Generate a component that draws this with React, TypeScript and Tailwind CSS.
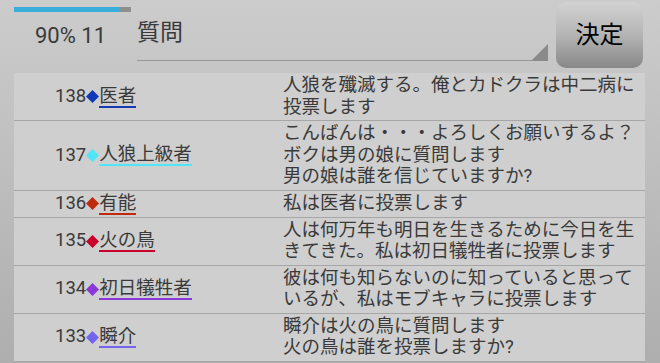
const rows = [
  {
    no: 138,
    name: "医者",
    line: "border-[#1838b0]",
    fill: "#1038b8",
    msg: "人狼を殲滅する。俺とカドクラは中二病に投票します",
  },
  {
    no: 137,
    name: "人狼上級者",
    line: "border-[#4ee6f8]",
    fill: "#4ee6f8",
    msg: "こんばんは・・・よろしくお願いするよ？\nボクは男の娘に質問します\n男の娘は誰を信じていますか?",
  },
  {
    no: 136,
    name: "有能",
    line: "border-[#c02a0c]",
    fill: "#c02a0c",
    msg: "私は医者に投票します",
  },
  {
    no: 135,
    name: "火の鳥",
    line: "border-[#c8022a]",
    fill: "#c8022a",
    msg: "人は何万年も明日を生きるために今日を生きてきた。私は初日犠牲者に投票します",
  },
  {
    no: 134,
    name: "初日犠牲者",
    line: "border-[#8a38d8]",
    fill: "#8a38d8",
    msg: "彼は何も知らないのに知っていると思っているが、私はモブキャラに投票します",
  },
  {
    no: 133,
    name: "瞬介",
    line: "border-[#7464ee]",
    fill: "#7464ee",
    msg: "瞬介は火の鳥に質問します\n火の鳥は誰を投票しますか?",
  },
];

function Diamond({ fill }: { fill: string }) {
  return (
    <svg width="13" height="13" viewBox="0 0 13 13" className="shrink-0">
      <polygon points="6.5,0 13,6.5 6.5,13 0,6.5" fill={fill} />
    </svg>
  );
}

export default function App() {
  return (
    <div className="flex h-[363px] w-[660px] flex-col overflow-hidden bg-gradient-to-b from-[#cccccc] to-[#aeaeae] font-['Roboto','Noto_Sans_CJK_JP',sans-serif] text-[#3a3a3a]">
      {/* header */}
      <div className="flex h-[73px] shrink-0">
        <div className="flex w-[137px] flex-col">
          <div className="ml-[14px] mt-[7px] flex h-[5px] w-[117px] bg-[#8e8e8e]">
            <div className="h-full w-[106px] bg-[#3aaedb]" />
          </div>
          <div className="mt-[11px] pl-[35px] text-[22px] leading-[26px]">90% 11</div>
        </div>
        <div className="relative flex-1">
          <div className="mt-[20px] text-[23px] leading-[26px]">質問</div>
          <div className="absolute bottom-[12px] left-0 right-0 h-px bg-[#979797]" />
          <svg width="17" height="17" viewBox="0 0 17 17" className="absolute bottom-[12px] right-0">
            <polygon points="17,0 17,17 0,17" fill="#8a8a8a" />
          </svg>
        </div>
        <button
          type="button"
          className="ml-[8px] mr-[17px] mt-[2px] flex h-[66px] w-[87px] items-center justify-center rounded-[10px] bg-gradient-to-b from-[#d2d2d2] via-[#b4b4b4] to-[#888888] text-[24px] text-black"
        >
          決定
        </button>
      </div>

      {/* list */}
      <div className="ml-[14px] w-[631px] bg-[#cfcfcf]">
        {rows.map((r) => (
          <div key={r.no} className="flex border-b border-[#a6a6a6] py-[2px] text-[18.5px] leading-[21.5px]">
            <div className="flex w-[269px] items-center pl-[41px]">
              <span>{r.no}</span>
              <Diamond fill={r.fill} />
              <span className={`border-b-2 leading-[20px] ${r.line}`}>{r.name}</span>
            </div>
            <div className="w-[362px] whitespace-pre-line">{r.msg}</div>
          </div>
        ))}
      </div>
    </div>
  );
}
